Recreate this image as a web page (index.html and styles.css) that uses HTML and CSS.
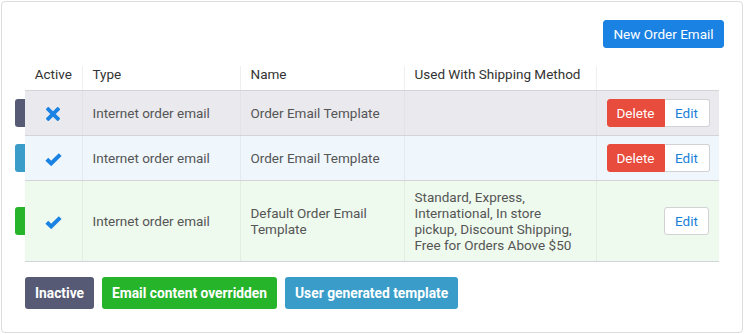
FILE: index.html
```html
<!DOCTYPE html>
<html>
<head>
<meta charset="utf-8">
<link rel="stylesheet" href="styles.css">
</head>
<body>
<div class="card">
  <div class="toolbar">
    <button class="btn btn-primary">New Order Email</button>
  </div>
  <table class="grid">
    <colgroup>
      <col class="c-active"><col class="c-type"><col class="c-name"><col class="c-ship"><col class="c-actions">
    </colgroup>
    <thead>
      <tr>
        <th class="center">Active</th>
        <th>Type</th>
        <th>Name</th>
        <th>Used With Shipping Method</th>
        <th></th>
      </tr>
    </thead>
    <tbody>
      <tr class="row-inactive">
        <td class="center cell-active"><span class="marker marker-inactive"></span>
          <svg class="ico" width="14" height="14" viewBox="0 0 14 14"><path d="M2.3 2.3L11.7 11.7M11.7 2.3L2.3 11.7" stroke="#1a82e2" stroke-width="3.8" stroke-linecap="square" fill="none"/></svg>
        </td>
        <td>Internet order email</td>
        <td>Order Email Template</td>
        <td></td>
        <td class="actions"><div class="btn-group"><button class="btn btn-danger">Delete</button><button class="btn btn-default">Edit</button></div></td>
      </tr>
      <tr class="row-user">
        <td class="center cell-active"><span class="marker marker-user"></span>
          <svg class="ico" width="17" height="13" viewBox="0 0 17 13"><path d="M1.8 6.2L6.2 10.4L15.2 1.6" stroke="#1a82e2" stroke-width="4" stroke-linejoin="miter" fill="none"/></svg>
        </td>
        <td>Internet order email</td>
        <td>Order Email Template</td>
        <td></td>
        <td class="actions"><div class="btn-group"><button class="btn btn-danger">Delete</button><button class="btn btn-default">Edit</button></div></td>
      </tr>
      <tr class="row-override">
        <td class="center cell-active"><span class="marker marker-override"></span>
          <svg class="ico" width="17" height="13" viewBox="0 0 17 13"><path d="M1.8 6.2L6.2 10.4L15.2 1.6" stroke="#1a82e2" stroke-width="4" stroke-linejoin="miter" fill="none"/></svg>
        </td>
        <td>Internet order email</td>
        <td>Default Order Email Template</td>
        <td class="ship">Standard, Express, International, In store pickup, Discount Shipping, Free for Orders Above $50</td>
        <td class="actions"><button class="btn btn-default btn-solo">Edit</button></td>
      </tr>
    </tbody>
  </table>
  <div class="legend">
    <span class="tag tag-inactive">Inactive</span>
    <span class="tag tag-override">Email content overridden</span>
    <span class="tag tag-user">User generated template</span>
  </div>
</div>
</body>
</html>
```
FILE: styles.css
```css
* { box-sizing: border-box; }
html, body { margin: 0; padding: 0; background: #ffffff; }
body {
  font-family: Roboto, "Liberation Sans", Arial, sans-serif;
  font-size: 13.5px;
  color: #555555;
}
.card {
  margin: 1px 0 0 1px;
  width: 742px;
  height: 332px;
  border: 1px solid #dddddd;
  border-radius: 4px;
  padding: 18px 18px 0 23px;
  background: #ffffff;
}
.toolbar {
  display: flex;
  justify-content: flex-end;
}
.btn {
  font-family: inherit;
  font-size: 13.5px;
  height: 28px;
  line-height: 26px;
  padding: 0;
  border: 1px solid transparent;
  border-radius: 3px;
  cursor: pointer;
  margin: 0;
  text-align: center;
}
.btn-primary {
  background: #1a82e2;
  border-color: #1a82e2;
  color: #ffffff;
  width: 121px;
}
.btn-danger {
  background: #e74c3c;
  border-color: #e74c3c;
  color: #ffffff;
  width: 58px;
}
.btn-default {
  background: #ffffff;
  border-color: #d2d2d6;
  color: #1a7fd8;
  width: 45px;
}
.btn-group { display: inline-flex; }
.btn-group .btn-danger { border-radius: 3px 0 0 3px; }
.btn-group .btn-default { border-radius: 0 3px 3px 0; border-left: 0; }
.grid {
  margin-top: 18px;
  width: 694px;
  table-layout: fixed;
  border-collapse: collapse;
}
.c-active { width: 57px; }
.c-type { width: 158px; }
.c-name { width: 164px; }
.c-ship { width: 192px; }
.c-actions { width: 123px; }
th {
  font-weight: normal;
  color: #333333;
  text-align: left;
  padding: 0 10px 8px;
  line-height: 16px;
  border-bottom: 1px solid #d3d4d9;
}
th + th { border-left: 1px solid #efeff1; }
th.center, td.center { text-align: center; padding-left: 0; padding-right: 0; }
td {
  padding: 8px 10px;
  line-height: 16px;
  vertical-align: middle;
  border-bottom: 1px solid #d3d4d9;
}
td + td { border-left: 1px solid #e2e3e7; }
.row-inactive td { background: #e9e9ee; }
.row-user td { background: #eff7fd; }
.row-override td { background: #effaee; }
.row-user td + td { border-left-color: #e3ebf1; }
.row-override td + td { border-left-color: #e3eee2; }
td.ship { padding-right: 18px; }
.actions { text-align: right; padding-right: 10px; }
.cell-active { position: relative; }
.ico { display: inline-block; vertical-align: middle; }
.marker {
  position: absolute;
  left: -10px;
  top: 50%;
  margin-top: -14px;
  width: 10px;
  height: 28px;
  border-radius: 3px 0 0 3px;
}
.marker-inactive { background: #565a74; }
.marker-user { background: #3a9dc9; }
.marker-override { background: #26b42a; }
.legend {
  display: flex;
  gap: 8px;
  margin-top: 15px;
}
.tag {
  display: inline-block;
  height: 32px;
  line-height: 32px;
  padding: 0 10px;
  border-radius: 3px;
  color: #ffffff;
  font-weight: bold;
  font-size: 13.8px;
}
.tag-inactive { background: #565a74; }
.tag-override { background: #26b42a; }
.tag-user { background: #3a9dc9; }
```
